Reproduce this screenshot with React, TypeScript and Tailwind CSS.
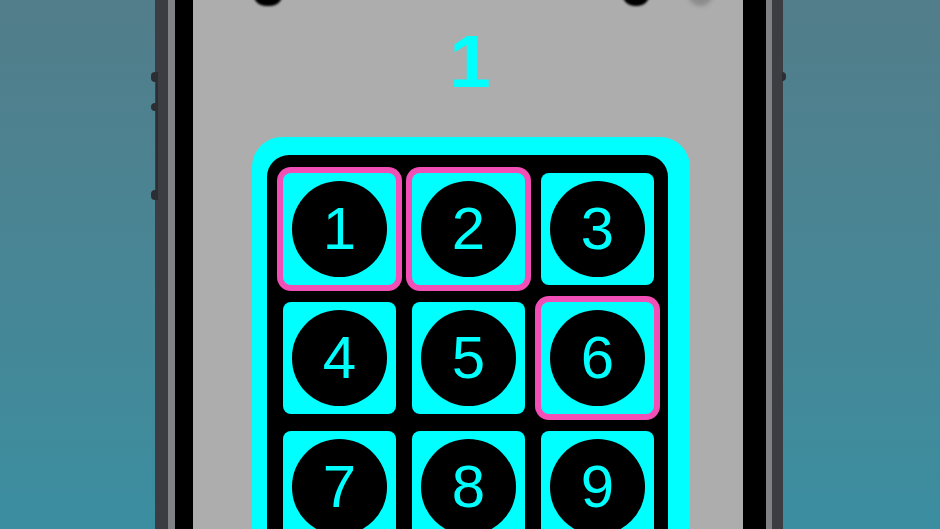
const tiles = [
  { n: 1, picked: true },
  { n: 2, picked: true },
  { n: 3, picked: false },
  { n: 4, picked: false },
  { n: 5, picked: false },
  { n: 6, picked: true },
  { n: 7, picked: false },
  { n: 8, picked: false },
  { n: 9, picked: false },
]

function Tile({ n, picked }: { n: number; picked: boolean }) {
  return (
    <div
      className={
        'flex h-[112px] w-[113px] items-center justify-center rounded-[8px] bg-[#00ffff] ' +
        (picked ? 'ring-[6px] ring-[#f24fb6]' : '')
      }
    >
      <div className="flex h-[96px] w-[95px] items-center justify-center rounded-full bg-black">
        <span className="text-[60px] leading-none text-[#00ffff]">{n}</span>
      </div>
    </div>
  )
}

export default function App() {
  return (
    <div
      className="flex h-[529px] w-[940px] overflow-hidden bg-linear-to-b from-[#527d8a] to-[#3a8ea0]"
      style={{ fontFamily: '"Liberation Sans", Arial, sans-serif' }}
    >
      {/* phone body: outer rim, bevel, black bezel */}
      <div className="relative ml-[155px] h-full w-[628px] shrink-0 border-l-[13px] border-r-[11px] border-[#3b3d42]">
        {/* volume / mute buttons on the left edge */}
        <div className="absolute -left-[17px] top-[72px] flex h-[128px] flex-col items-end justify-between border-r-2 border-[#2c2e32]">
          <div className="flex flex-col gap-[21px]">
            <div className="h-[10px] w-[5px] rounded-l-sm bg-[#2c2e32]" />
            <div className="h-[8px] w-[5px] rounded-l-sm bg-[#2c2e32]" />
          </div>
          <div className="h-[10px] w-[5px] rounded-l-sm bg-[#2c2e32]" />
        </div>
        <div className="absolute -right-[14px] top-[72px] h-[9px] w-[4px] rounded-r-sm bg-[#2c2e32]" />

        <div className="h-full border-l-[7px] border-r-[6px] border-[#808185]">
          <div className="h-full border-l-[18px] border-r-[23px] border-black">
            <div className="relative flex h-full flex-col bg-[#adadad]">
              {/* camera dots peeking in at the top edge */}
              <div className="absolute -top-[20px] left-[60px] right-[30px] flex">
                <div className="h-[26px] w-[30px] rounded-full bg-black blur-[1px]" />
                <div className="ml-auto h-[26px] w-[28px] rounded-full bg-black blur-[1px]" />
                <div className="ml-[38px] h-[26px] w-[25px] rounded-full bg-[#8c8c8c] blur-[2px]" />
              </div>

              <div className="mt-[25px] pl-[4px] text-center text-[74px] font-bold leading-none text-[#00ffff]">1</div>

              <div className="ml-[59px] mt-[38px] w-[438px] rounded-[30px] bg-[#00ffff] pl-[15px] pr-[22px] pt-[18px]">
                <div className="rounded-[22px] bg-black pb-[20px] pl-[16px] pr-[15px] pt-[18px]">
                  <div className="grid grid-cols-[113px_113px_113px] gap-x-[16px] gap-y-[17px]">
                    {tiles.map((t) => (
                      <Tile key={t.n} n={t.n} picked={t.picked} />
                    ))}
                  </div>
                </div>
              </div>
            </div>
          </div>
        </div>
      </div>
    </div>
  )
}
